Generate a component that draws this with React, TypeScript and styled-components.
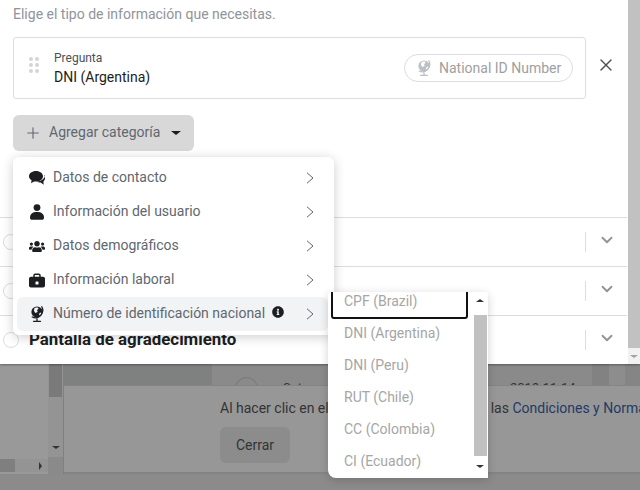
import React from 'react';
import styled, { createGlobalStyle } from 'styled-components';
import { FaInfoCircle, FaUsers } from 'react-icons/fa';
import { FiChevronDown, FiPlus, FiX } from 'react-icons/fi';

const GlobalStyle = createGlobalStyle`
  html, body { margin: 0; padding: 0; background: #8c8c8c; }
  body { font-family: Roboto, "Liberation Sans", sans-serif; }
`;

const Page = styled.div`
  position: relative;
  width: 640px;
  height: 490px;
  overflow: hidden;
  background: #8b8b8b;
`;

/* ---- dimmed page behind the dialog ---- */
const Behind = styled.div`
  display: grid;
  grid-template-columns: 48px 16px 1fr;
  grid-template-rows: 385px 89px 1fr;
  height: 100%;
`;

const LeftPane = styled.div`
  grid-row: 1 / 3;
  grid-column: 1;
  background: #999;
  display: flex;
  flex-direction: column;
  justify-content: flex-end;
`;

const HScroll = styled.div`
  height: 13px;
  margin-bottom: 2px;
  background: #949494;
  display: flex;
  align-items: center;
  justify-content: space-between;
  padding-right: 6px;
`;

const HThumb = styled.div`
  width: 15px;
  height: 13px;
  background: #7f7f7f;
`;

const VScroll = styled.div`
  grid-row: 1 / 3;
  grid-column: 2;
  background: #949494;
  display: flex;
  flex-direction: column;
  align-items: center;
  box-sizing: border-box;
  border-right: 1px solid #808080;
`;

const VThumb = styled.div`
  width: 13px;
  height: 397px;
  background: #7a7a7a;
  flex: none;
`;

const ArrowSlot = styled.div`
  height: 20px;
  margin-top: 40px;
  display: flex;
  align-items: center;
`;

const Corner = styled.div`
  width: 100%;
  height: 17px;
  background: #8a8a8a;
`;

const Triangle = styled.span<{ $dir: 'up' | 'down' | 'right'; $color: string; $size?: number }>`
  display: inline-block;
  flex: none;
  width: 0;
  height: 0;
  border-style: solid;
  border-color: transparent;
  ${(p) => {
    const s = p.$size ?? 4;
    if (p.$dir === 'up') return `border-width: 0 ${s}px ${s - 1}px; border-bottom-color: ${p.$color};`;
    if (p.$dir === 'down') return `border-width: ${s - 1}px ${s}px 0; border-top-color: ${p.$color};`;
    return `border-width: ${s}px 0 ${s}px ${s - 1}px; border-left-color: ${p.$color};`;
  }}
`;

const BehindTop = styled.div`
  grid-row: 1;
  grid-column: 3;
  display: flex;
  overflow: hidden;
  background: #8a8a8a;
`;

const BehindDark = styled.div`
  width: 148px;
  flex: none;
  background: #7f8080;
`;

const BehindTable = styled.div`
  flex: 1;
  padding: 377px 0 0 23px;
  display: flex;
  align-items: flex-start;
  font-size: 13px;
  line-height: 16px;
  color: #333;
`;

const BehindRadio = styled.div`
  width: 21px;
  height: 21px;
  border: 1px solid #777;
  border-radius: 50%;
  flex: none;
`;

const BehindCell = styled.span<{ $w: number; $ml: number }>`
  width: ${(p) => p.$w}px;
  margin-left: ${(p) => p.$ml}px;
  padding-top: 3px;
  flex: none;
  white-space: nowrap;
`;

const Band = styled.div<{ $w: number; $bg: string }>`
  width: ${(p) => p.$w}px;
  background: ${(p) => p.$bg};
  flex: none;
`;

const BehindFooter = styled.div`
  grid-row: 2;
  grid-column: 3;
  background: #979797;
  border-top: 1px solid #848484;
  border-bottom: 2px solid #848484;
  padding: 13px 0 0 156px;
  box-sizing: border-box;
  overflow: hidden;
  font-size: 14px;
  line-height: 19px;
  color: #333;
`;

const FooterLine = styled.div`
  display: flex;
  white-space: nowrap;
`;

const FooterTail = styled.span`
  margin-left: 162px;
`;

const FooterLink = styled.span`
  color: #223a66;
`;

const CloseButton = styled.div`
  width: 70px;
  height: 36px;
  margin-top: 9px;
  border-radius: 6px;
  background: #8c8c8c;
  display: flex;
  align-items: center;
  justify-content: center;
  font-size: 14px;
  color: #333;
`;

/* ---- dialog ---- */
const Dialog = styled.div`
  position: absolute;
  top: 0;
  left: 0;
  width: 640px;
  height: 364px;
  background: #fff;
  display: flex;
  box-shadow: 0 1px 2px rgba(0, 0, 0, 0.35);
`;

const DialogBody = styled.div`
  width: 627px;
  flex: none;
  overflow: hidden;
`;

const Section = styled.div`
  padding: 5px 0 0 13px;
  height: 217px;
  box-sizing: border-box;
`;

const Intro = styled.div`
  font-size: 14px;
  line-height: 19px;
  color: #90949c;
`;

const CardRow = styled.div`
  display: flex;
  align-items: center;
  margin-top: 13px;
`;

const QuestionCard = styled.div`
  width: 573px;
  height: 62px;
  flex: none;
  box-sizing: border-box;
  border: 1px solid #dadde1;
  border-radius: 3px;
  display: flex;
  align-items: center;
  padding: 0 12px 0 15px;
`;

const Grip = styled.div`
  display: grid;
  grid-template-columns: repeat(2, 4px);
  grid-auto-rows: 4px;
  gap: 2px;
  margin: -6px 15px 0 0;
`;

const GripDot = styled.span`
  border-radius: 50%;
  background: #d3d5da;
`;

const QuestionText = styled.div`
  flex: 1;
`;

const QuestionLabel = styled.div`
  font-size: 12px;
  line-height: 16px;
  color: #4b4f56;
`;

const QuestionValue = styled.div`
  margin-top: 1px;
  font-size: 14px;
  line-height: 20px;
  color: #1c1e21;
`;

const Pill = styled.div`
  width: 169px;
  height: 28px;
  box-sizing: border-box;
  border: 1px solid #dadde1;
  border-radius: 14px;
  padding: 0 0 1px 11px;
  display: flex;
  align-items: center;
  gap: 7px;
  font-size: 14px;
  color: #a0a0a0;
`;

const RemoveButton = styled.div`
  width: 40px;
  display: flex;
  justify-content: center;
  color: #4b4f56;
  margin-top: -6px;
`;

const AddButton = styled.div`
  margin-top: 16px;
  width: 181px;
  height: 36px;
  border-radius: 6px;
  background: #d8d8d8;
  display: flex;
  align-items: center;
  padding-left: 11px;
  box-sizing: border-box;
  font-size: 14px;
  color: #606770;
`;

const AddLabel = styled.span`
  margin: 0 11px 0 7px;
  padding-bottom: 2px;
`;

const StepRow = styled.div`
  height: 48px;
  border-top: 1px solid #dadde1;
  display: flex;
  align-items: center;
  padding-left: 3px;
`;

const Radio = styled.div`
  width: 14px;
  height: 14px;
  border: 1px solid #dadde1;
  border-radius: 50%;
  flex: none;
`;

const StepTitle = styled.div`
  margin-left: 10px;
  padding-bottom: 2px;
  flex: 1;
  font-size: 16.9px;
  font-weight: 700;
  color: #1c1e21;
`;

const StepDivider = styled.div`
  width: 1px;
  height: 20px;
  background: #dadde1;
`;

const StepChevron = styled.div`
  width: 41px;
  margin-top: -5px;
  display: flex;
  justify-content: center;
  color: #8d949e;
`;

const DialogScrollbar = styled.div`
  margin-left: 1px;
  width: 12px;
  background: #f1f1f1;
  display: flex;
  flex-direction: column;
  align-items: center;
`;

const DialogThumb = styled.div`
  width: 100%;
  height: 348px;
  background: #c1c1c1;
  flex: none;
`;

const ScrollArrow = styled.div`
  flex: 1;
  display: flex;
  align-items: center;
  justify-content: center;
`;

/* ---- category menu ---- */
const Menu = styled.div`
  position: absolute;
  top: 157px;
  left: 13px;
  width: 321px;
  height: 178px;
  box-sizing: border-box;
  padding: 4px;
  background: #fff;
  border-radius: 6px;
  box-shadow: 0 2px 12px rgba(0, 0, 0, 0.2);
`;

const MenuItem = styled.div<{ $active?: boolean }>`
  height: 34px;
  width: 311px;
  box-sizing: border-box;
  padding-left: 12px;
  padding-right: 14px;
  display: flex;
  align-items: center;
  border-radius: 6px;
  background: ${(p) => (p.$active ? '#f2f3f5' : 'transparent')};
  font-size: 14px;
  color: #606770;
`;

const MenuIcon = styled.span`
  width: 16px;
  height: 16px;
  margin-right: 8px;
  flex: none;
  display: flex;
  align-items: center;
  justify-content: center;
  color: #1c1e21;
`;

const MenuLabel = styled.span`
  padding-bottom: 2px;
  white-space: nowrap;
`;

const InfoMark = styled.span`
  margin-left: 7px;
  margin-top: -4px;
  display: flex;
  color: #1c1e21;
`;

const MenuChevron = styled.svg`
  margin-left: auto;
  flex: none;
`;

/* ---- id list ---- */
const SubMenu = styled.div`
  position: absolute;
  top: 292px;
  left: 328px;
  width: 160px;
  height: 186px;
  background: #fff;
  border-radius: 4px 4px 0 8px;
  box-shadow: 0 2px 10px rgba(0, 0, 0, 0.18);
  display: flex;
  overflow: hidden;
`;

const SubList = styled.div`
  width: 144px;
  flex: none;
  display: flex;
  flex-direction: column;
`;

const FocusedOption = styled.div`
  margin: -5px 4px 0 3px;
  height: 32px;
  flex: none;
  box-sizing: border-box;
  border: 2px solid #111;
  border-radius: 3px;
  padding: 0 0 4px 11px;
  display: flex;
  align-items: center;
  font-size: 14px;
  color: #a6a6a6;
`;

const SubOption = styled.div`
  height: 32px;
  flex: none;
  box-sizing: border-box;
  padding: 0 0 4px 16px;
  display: flex;
  align-items: center;
  font-size: 14px;
  color: #a6a6a6;
`;

const SubScrollbar = styled.div`
  width: 16px;
  flex: none;
  display: flex;
  flex-direction: column;
  align-items: center;
  background: #fff;
`;

const SubArrow = styled.div<{ $pb?: number }>`
  height: 24px;
  box-sizing: border-box;
  padding-bottom: ${(p) => p.$pb ?? 0}px;
  display: flex;
  align-items: center;
  justify-content: center;
`;

const SubThumb = styled.div`
  width: 13px;
  height: 141px;
  flex: none;
  background: #c1c1c1;
`;

const Comments = () => (
  <svg width="16" height="14" viewBox="0 0 16 14" fill="#1c1e21">
    <path d="M7 0c4 0 7 2.300 7 5.300s-3 5.300-7 5.300c-.7 0-1.300-.1-1.900-.2L2 12.300l.6-3.100C1 8.300 0 6.900 0 5.300 0 2.300 3 0 7 0z" />
    <path d="M15 4.500c.7.8 1 1.700 1 2.700 0 1.300-.6 2.400-1.600 3.200l.3 3.300-3-2.300c-1.500.2-3-.1-4-.9 4 0 8.200-2.700 8.300-6z" />
  </svg>
);

const UserGlyph = () => (
  <svg width="16" height="16" viewBox="0 0 16 16" fill="#1c1e21">
    <circle cx="8" cy="3.600" r="3.400" />
    <path d="M1 13.500C1 10 3.500 8 8 8s7 2 7 5.500c0 1.500-.8 2.300-2 2.300H3c-1.200 0-2-.8-2-2.300z" />
  </svg>
);

const BriefcaseGlyph = () => (
  <svg width="16" height="15" viewBox="0 0 16 15" fill="none">
    <path d="M5 4V2.500C5 1.700 5.600 1.200 6.300 1.200h3.400c.7 0 1.300.5 1.300 1.300V4" stroke="#1c1e21" strokeWidth="1.500" />
    <path d="M0 6c0-1.300.8-2.200 2-2.200h12c1.200 0 2 .9 2 2.200v6.500c0 1.300-.8 2-2 2H2c-1.200 0-2-.7-2-2z" fill="#1c1e21" />
    <rect x="6.500" y="8.500" width="3" height="3" rx=".6" fill="#fff" />
  </svg>
);

const GlobeStand = ({ color, land, size }: { color: string; land: string; size: number }) => (
  <svg width={size} height={size} viewBox="0 0 16 16" fill="none">
    <circle cx="8" cy="6" r="5.600" fill={color} />
    <path d="M5.500 2l2.800-.8 1.400 1.500-1.700 1.200.7 2-2.400 1.200L4.900 4.800zM10.500 7l1.800-.6-.6 2.400-1.700.7z" fill={land} />
    <path d="M12.800.8a7.400 7.400 0 0 1-9.600 10.200M8 13v2M4.500 15.300h7" stroke={color} strokeWidth="1.300" strokeLinecap="round" />
  </svg>
);

const ChevronRight = () => (
  <MenuChevron width="8" height="12" viewBox="0 0 8 12" fill="none">
    <path d="M1 .8L7 6l-6 5.200" stroke="#606770" strokeWidth="1" />
  </MenuChevron>
);

const menuItems = [
  { icon: <Comments />, label: 'Datos de contacto' },
  { icon: <UserGlyph />, label: 'Información del usuario' },
  { icon: <FaUsers size={17} />, label: 'Datos demográficos' },
  { icon: <BriefcaseGlyph />, label: 'Información laboral' },
];

const options = ['DNI (Argentina)', 'DNI (Peru)', 'RUT (Chile)', 'CC (Colombia)', 'CI (Ecuador)'];

const App: React.FC = () => (
  <>
    <GlobalStyle />
    <Page>
      <Behind>
        <LeftPane>
          <HScroll>
            <HThumb />
            <Triangle $dir="right" $color="#333" />
          </HScroll>
        </LeftPane>
        <VScroll>
          <VThumb />
          <ArrowSlot>
            <Triangle $dir="down" $color="#333" />
          </ArrowSlot>
          <Corner />
        </VScroll>
        <BehindTop>
          <BehindDark />
          <BehindTable>
            <BehindRadio />
            <BehindCell $w={180} $ml={25}>Sat</BehindCell>
            <BehindCell $w={82} $ml={47}>2019-11-14</BehindCell>
          </BehindTable>
          <Band $w={17} $bg="#828282" />
          <Band $w={16} $bg="#8d8d8d" />
          <Band $w={16} $bg="#858585" />
        </BehindTop>
        <BehindFooter>
          <FooterLine>
            <span>Al hacer clic en el</span>
            <FooterTail>
              las <FooterLink>Condiciones y Normas</FooterLink>
            </FooterTail>
          </FooterLine>
          <CloseButton>Cerrar</CloseButton>
        </BehindFooter>
      </Behind>

      <Dialog>
        <DialogBody>
          <Section>
            <Intro>Elige el tipo de información que necesitas.</Intro>
            <CardRow>
              <QuestionCard>
                <Grip>
                  {Array.from({ length: 6 }).map((_, i) => (
                    <GripDot key={i} />
                  ))}
                </Grip>
                <QuestionText>
                  <QuestionLabel>Pregunta</QuestionLabel>
                  <QuestionValue>DNI (Argentina)</QuestionValue>
                </QuestionText>
                <Pill>
                  <GlobeStand color="#bcc0c4" land="#fff" size={16} />
                  National ID Number
                </Pill>
              </QuestionCard>
              <RemoveButton>
                <FiX size={20} strokeWidth={1.6} />
              </RemoveButton>
            </CardRow>
            <AddButton>
              <FiPlus size={18} strokeWidth={1.5} />
              <AddLabel>Agregar categoría</AddLabel>
              <Triangle $dir="down" $color="#1c1e21" $size={5} />
            </AddButton>
          </Section>
          <StepRow>
            <Radio />
            <StepTitle />
            <StepDivider />
            <StepChevron>
              <FiChevronDown size={18} strokeWidth={2.5} />
            </StepChevron>
          </StepRow>
          <StepRow>
            <Radio />
            <StepTitle />
            <StepDivider />
            <StepChevron>
              <FiChevronDown size={18} strokeWidth={2.5} />
            </StepChevron>
          </StepRow>
          <StepRow>
            <Radio />
            <StepTitle>Pantalla de agradecimiento</StepTitle>
            <StepDivider />
            <StepChevron>
              <FiChevronDown size={18} strokeWidth={2.5} />
            </StepChevron>
          </StepRow>
        </DialogBody>
        <DialogScrollbar>
          <DialogThumb />
          <ScrollArrow>
            <Triangle $dir="down" $color="#a3a3a3" />
          </ScrollArrow>
        </DialogScrollbar>
      </Dialog>

      <Menu>
        {menuItems.map((item) => (
          <MenuItem key={item.label}>
            <MenuIcon>{item.icon}</MenuIcon>
            <MenuLabel>{item.label}</MenuLabel>
            <ChevronRight />
          </MenuItem>
        ))}
        <MenuItem $active>
          <MenuIcon>
            <GlobeStand color="#1c1e21" land="#f2f3f5" size={16} />
          </MenuIcon>
          <MenuLabel>Número de identificación nacional</MenuLabel>
          <InfoMark>
            <FaInfoCircle size={12} />
          </InfoMark>
          <ChevronRight />
        </MenuItem>
      </Menu>

      <SubMenu>
        <SubList>
          <FocusedOption>CPF (Brazil)</FocusedOption>
          {options.map((o) => (
            <SubOption key={o}>{o}</SubOption>
          ))}
        </SubList>
        <SubScrollbar>
          <SubArrow $pb={6}>
            <Triangle $dir="up" $color="#333" />
          </SubArrow>
          <SubThumb />
          <SubArrow $pb={0}>
            <Triangle $dir="down" $color="#333" />
          </SubArrow>
        </SubScrollbar>
      </SubMenu>
    </Page>
  </>
);

export default App;
